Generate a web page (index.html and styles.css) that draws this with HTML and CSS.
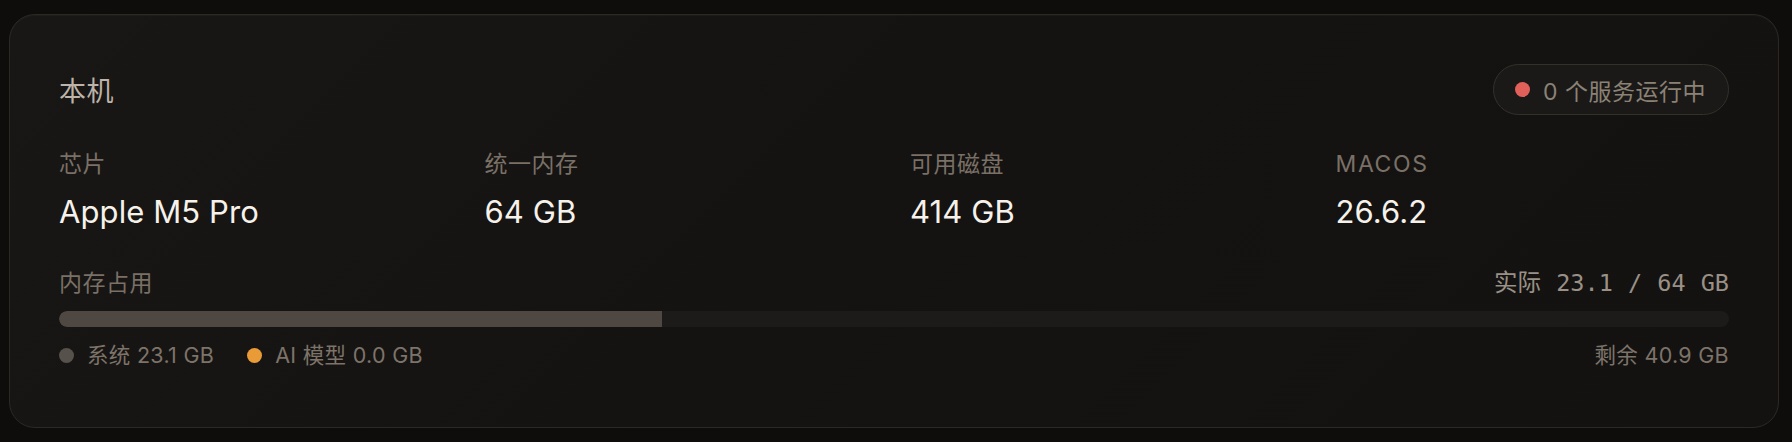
FILE: index.html
```html
<!DOCTYPE html>
<html lang="zh-CN">

<head>
    <meta charset="UTF-8">
    <meta name="viewport" content="width=device-width, initial-scale=1.0">
    <title>本机</title>
    <link rel="stylesheet" href="styles.css">
</head>

<body>
    <div class="page">
        <section class="card">
            <header class="card-head">
                <h2 class="card-title">本机</h2>
                <span class="status"><i class="dot dot-red"></i>0 个服务运行中</span>
            </header>

            <div class="specs">
                <div class="spec">
                    <div class="label">芯片</div>
                    <div class="spec-value">Apple M5 Pro</div>
                </div>
                <div class="spec">
                    <div class="label">统一内存</div>
                    <div class="spec-value">64 GB</div>
                </div>
                <div class="spec">
                    <div class="label">可用磁盘</div>
                    <div class="spec-value">414 GB</div>
                </div>
                <div class="spec">
                    <div class="label upper">macOS</div>
                    <div class="spec-value">26.6.2</div>
                </div>
            </div>

            <div class="mem">
                <div class="mem-head">
                    <span class="label">内存占用</span>
                    <span class="mem-total">实际 23.1 / 64 GB</span>
                </div>
                <div class="bar">
                    <div class="bar-fill" style="width: 36.1%"></div>
                </div>
                <div class="mem-foot">
                    <div class="legend">
                        <span class="legend-item"><i class="dot dot-gray"></i>系统 23.1 GB</span>
                        <span class="legend-item"><i class="dot dot-orange"></i>AI 模型 0.0 GB</span>
                    </div>
                    <span class="free">剩余 40.9 GB</span>
                </div>
            </div>
        </section>
    </div>
</body>

</html>
```

FILE: styles.css
```css
body {
    margin: 0;
    background-color: #0e0d0c;
    font-family: 'Inter', 'Noto Sans CJK SC', sans-serif;
}

.page {
    padding: 14px 13px 20px 9px;
}

.card {
    background: linear-gradient(135deg, #181715 0%, #141312 45%, #131211 100%);
    border: 1px solid #2c2925;
    border-radius: 26px;
    padding: 49px 49px 58px 49px;
    box-shadow: inset 0 1px 0 rgba(255, 255, 255, 0.03);
}

.card-head {
    display: flex;
    align-items: center;
    justify-content: space-between;
}

.card-title {
    margin: 0;
    font-size: 27px;
    font-weight: 400;
    color: #bdb3a8;
    letter-spacing: 0.5px;
}

.status {
    display: flex;
    align-items: center;
    gap: 13px;
    height: 49px;
    padding: 0 22px 0 21px;
    border: 1px solid #34302b;
    border-radius: 26px;
    background-color: #1a1917;
    font-size: 23px;
    color: #8b8276;
    letter-spacing: 0.5px;
}

.dot {
    display: inline-block;
    width: 15px;
    height: 15px;
    border-radius: 50%;
    flex-shrink: 0;
}

.dot-red {
    background-color: #e1605a;
}

.dot-gray {
    background-color: #57514b;
}

.dot-orange {
    background-color: #e99b38;
}

.specs {
    display: grid;
    grid-template-columns: repeat(4, 1fr);
    gap: 32px;
    margin-top: 33px;
}

.label {
    font-size: 23px;
    line-height: 32px;
    color: #7a7066;
    letter-spacing: 0.5px;
}

.upper {
    text-transform: uppercase;
    letter-spacing: 1.6px;
}

.spec-value {
    margin-top: 12px;
    font-size: 31px;
    line-height: 40px;
    color: #f6f2eb;
    letter-spacing: 0.1px;
}

.mem {
    margin-top: 35px;
}

.mem-head {
    display: flex;
    justify-content: space-between;
    align-items: center;
}

.mem-total {
    font-family: 'DejaVu Sans Mono', 'Noto Sans CJK SC', monospace;
    font-size: 23.5px;
    line-height: 32px;
    color: #9a9086;
    word-spacing: 1px;
}

.bar {
    height: 16px;
    margin-top: 12px;
    border-radius: 8px;
    background-color: #1c1b19;
    overflow: hidden;
}

.bar-fill {
    height: 100%;
    background-color: #4f4842;
    border-radius: 8px 0 0 8px;
}

.mem-foot {
    display: flex;
    justify-content: space-between;
    align-items: center;
    margin-top: 14px;
    font-size: 21.5px;
    line-height: 28px;
    color: #7d7369;
    letter-spacing: 0.3px;
}

.legend {
    display: flex;
    gap: 33px;
}

.legend-item {
    display: flex;
    align-items: center;
    gap: 13px;
}

.free {
    color: #7d7369;
}
```
